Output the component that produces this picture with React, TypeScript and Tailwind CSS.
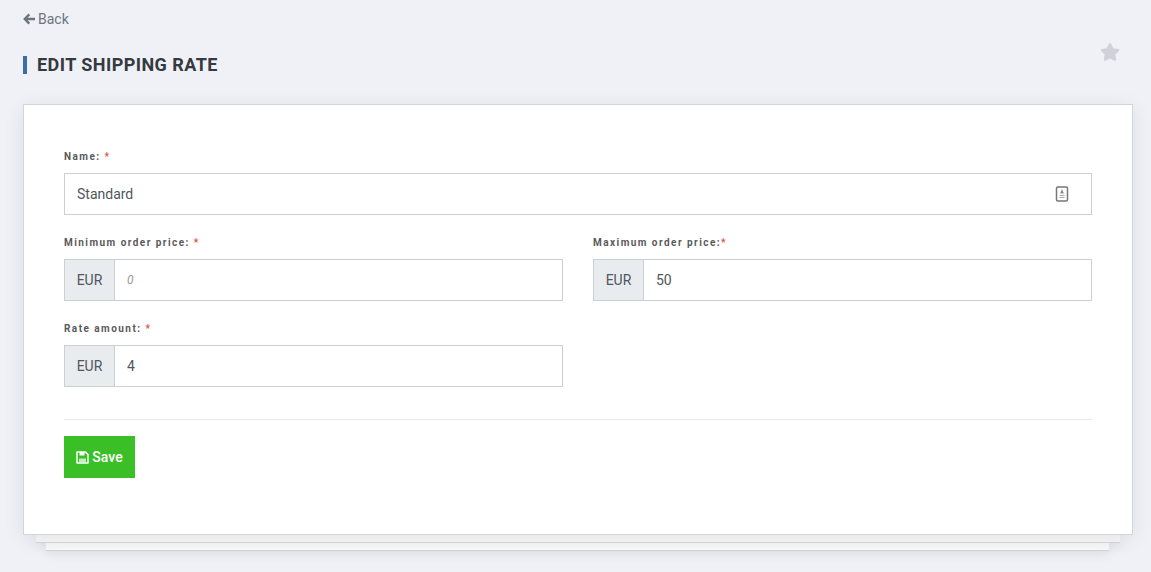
import { FaStar } from "react-icons/fa";

function Label({ text, gap = true }: { text: string; gap?: boolean }) {
  return (
    <label className="block h-[13px] text-[10px] leading-[13px] font-bold tracking-[1.45px] text-[#5a5a5a]">
      {text}
      {gap ? " " : ""}
      <span className="text-[#d9534f]">*</span>
    </label>
  );
}

function MoneyInput({ value, placeholder }: { value?: string; placeholder?: string }) {
  return (
    <div className="mt-[10px] flex h-[42px] border border-[#ccd0d4] bg-white text-sm">
      <div className="flex w-[50px] items-center justify-center border-r border-[#ccd0d4] bg-[#e9ecef] text-[#50565c]">
        EUR
      </div>
      <div className="flex flex-1 items-center pl-3 text-[#50565c]">
        {placeholder ? <span className="text-xs italic text-[#999]">{placeholder}</span> : value}
      </div>
    </div>
  );
}

export default function App() {
  return (
    <div className="h-[572px] overflow-hidden bg-[#eff1f6] font-['Roboto',sans-serif]">
      <div className="flex h-[104px] flex-col px-[23px]">
        <div className="flex h-[38px] items-center gap-[3px] text-sm text-[#6c757d]">
          <svg viewBox="0 0 12 12" className="h-3 w-3" fill="none" stroke="#6c757d" strokeWidth="2.4">
            <path d="M6.3 1.4 1.8 6l4.5 4.6M2 6h10" />
          </svg>
          <span>Back</span>
        </div>
        <div className="flex items-start justify-between pr-[3px]">
          <h1 className="mt-[18px] border-l-4 border-[#3a6ea5] pl-[10px] text-[18px] leading-[18px] font-bold tracking-[0.45px] text-[#343a40]">
            EDIT SHIPPING RATE
          </h1>
          <FaStar className="mr-[5px] mt-[4px] h-5 w-5 text-[#cfd3d9]" />
        </div>
      </div>

      <div className="relative z-20 mx-[23px] h-[431px] w-[1110px] border border-[#d2d5d9] bg-white px-10 pt-[45px] shadow-[0_4px_20px_rgba(0,0,0,0.08)]">
        <Label text="Name:" />
        <div className="mt-[10px] flex h-[42px] items-center justify-between border border-[#ccd0d4] pl-3 pr-[22px] text-sm text-[#50565c]">
          <span>Standard</span>
          <svg viewBox="0 0 14 16" className="h-4 w-[14px]" fill="none">
            <rect x="1.5" y="1" width="11" height="14" rx="1.5" stroke="#777" strokeWidth="1.5" />
            <path d="M7 3 8.8 7.5H5.2Z" fill="#888" />
            <path d="M4.5 9.5h5M4.5 11.5h5" stroke="#aaa" strokeWidth="1" />
          </svg>
        </div>

        <div className="mt-[21px] grid grid-cols-2 gap-x-[30px]">
          <div>
            <Label text="Minimum order price:" />
            <MoneyInput placeholder="0" />
          </div>
          <div>
            <Label text="Maximum order price:" gap={false} />
            <MoneyInput value="50" />
          </div>
        </div>

        <div className="mt-[21px] grid grid-cols-2 gap-x-[30px]">
          <div>
            <Label text="Rate amount:" />
            <MoneyInput value="4" />
          </div>
        </div>

        <div className="mt-8 border-t border-[#e6e8ea]" />

        <button className="mt-4 flex h-[42px] w-[71px] items-center justify-center gap-[3px] bg-[#3abf26] text-sm font-medium text-white">
          <svg viewBox="0 0 13 13" className="h-[13px] w-[13px]" fill="none">
            <path d="M1 1h8.5L12 3.5V12H1Z" stroke="white" strokeWidth="1.5" strokeLinejoin="round" />
            <rect x="3.5" y="1" width="5" height="3.5" fill="white" />
            <rect x="3" y="7.5" width="7" height="4" fill="white" opacity="0.7" />
          </svg>
          Save
        </button>
      </div>

      <div className="relative z-10 mx-[36px] h-[8px] w-[1084px] border-b border-[#d5d7da] bg-[#f7f7f7] shadow-[0_3px_12px_rgba(0,0,0,0.08)]" />
      <div className="mx-[46px] h-[8px] w-[1063px] border-b border-[#d5d7da] bg-white shadow-[0_3px_12px_rgba(0,0,0,0.08)]" />
    </div>
  );
}
